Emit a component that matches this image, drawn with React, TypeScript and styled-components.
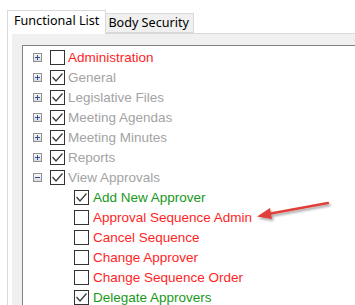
import styled, { createGlobalStyle } from 'styled-components';

const GlobalStyle = createGlobalStyle`
  html, body {
    margin: 0;
    padding: 0;
    background: #ffffff;
  }
`;

const Screen = styled.div`
  position: relative;
  display: flex;
  flex-direction: column;
  width: 355px;
  height: 305px;
  padding: 10px 0 0 7px;
  box-sizing: border-box;
  overflow: hidden;
  background: #ffffff;
`;

const TabStrip = styled.div`
  display: flex;
  align-items: flex-end;
  height: 23px;
`;

const Tab = styled.div<{ $active?: boolean }>`
  position: relative;
  z-index: ${(p) => (p.$active ? 1 : 0)};
  box-sizing: border-box;
  height: ${(p) => (p.$active ? '24px' : '20px')};
  margin-bottom: ${(p) => (p.$active ? '-1px' : '0')};
  padding: ${(p) => (p.$active ? '2px 6px 0 6px' : '1px 4px 0 2px')};
  border: 1px solid #d9d9d9;
  border-bottom: ${(p) => (p.$active ? 'none' : '1px solid #d9d9d9')};
  border-left: ${(p) => (p.$active ? '1px solid #d9d9d9' : 'none')};
  background: ${(p) => (p.$active ? '#ffffff' : '#f0f0f0')};
  color: #000000;
  font-family: 'Noto Sans', 'Open Sans', sans-serif;
  font-size: 12.6px;
  line-height: 16px;
  white-space: nowrap;
`;

const Panel = styled.div`
  flex: 1;
  display: flex;
  flex-direction: column;
  padding-left: 4px;
  border-top: 1px solid #d9d9d9;
  border-left: 1px solid #d9d9d9;
  background: #ffffff;
`;

const GroupArea = styled.div`
  flex: 1;
  display: flex;
  flex-direction: column;
  padding: 11px 0 0 10px;
  background: #f0f0f0;
`;

const TreeBox = styled.div`
  flex: 1;
  padding-top: 1px;
  border-top: 1px solid #828282;
  border-left: 1px solid #828282;
  background: #ffffff;
  font-family: 'Liberation Sans', Arial, sans-serif;
  font-size: 13.5px;
`;

const Row = styled.div<{ $child?: boolean }>`
  display: flex;
  align-items: center;
  height: 20px;
  padding-left: ${(p) => (p.$child ? '51px' : '10px')};
  white-space: nowrap;
`;

const Expander = styled.div`
  display: flex;
  align-items: center;
  justify-content: center;
  box-sizing: border-box;
  width: 9px;
  height: 9px;
  margin-right: 8px;
  border: 1px solid #919191;
  background: linear-gradient(#f8f8f8, #dcdcdc);
`;

const Box = styled.div`
  display: flex;
  align-items: center;
  justify-content: center;
  box-sizing: border-box;
  width: 15px;
  height: 15px;
  border: 1px solid #333333;
  background: #ffffff;
`;

const Label = styled.span<{ $tone: 'red' | 'green' | 'gray'; $child?: boolean }>`
  margin-left: ${(p) => (p.$child ? '4px' : '3px')};
  color: ${(p) => (p.$tone === 'red' ? '#ff1f1f' : p.$tone === 'green' ? '#17991a' : '#a3a3a3')};
`;

const ArrowLayer = styled.svg`
  position: absolute;
  left: 0;
  top: 0;
  pointer-events: none;
`;

const ExpandIcon = ({ open }: { open?: boolean }) => (
  <svg width="7" height="7" viewBox="0 0 7 7">
    <path d="M1 3.5h5" stroke="#2f4f9a" strokeWidth="1" />
    {!open && <path d="M3.5 1v5" stroke="#2f4f9a" strokeWidth="1" />}
  </svg>
);

const Check = ({ checked }: { checked: boolean }) => (
  <Box>
    {checked && (
      <svg width="13" height="13" viewBox="0 0 13 13">
        <path d="M1.5 6 L5 10 L11.5 2.5" fill="none" stroke="#3c3c3c" strokeWidth="1.3" />
      </svg>
    )}
  </Box>
);

type Tone = 'red' | 'green' | 'gray';

interface Item {
  label: string;
  tone: Tone;
  checked: boolean;
  child?: boolean;
  open?: boolean;
}

const items: Item[] = [
  { label: 'Administration', tone: 'red', checked: false },
  { label: 'General', tone: 'gray', checked: true },
  { label: 'Legislative Files', tone: 'gray', checked: true },
  { label: 'Meeting Agendas', tone: 'gray', checked: true },
  { label: 'Meeting Minutes', tone: 'gray', checked: true },
  { label: 'Reports', tone: 'gray', checked: true },
  { label: 'View Approvals', tone: 'gray', checked: true, open: true },
  { label: 'Add New Approver', tone: 'green', checked: true, child: true },
  { label: 'Approval Sequence Admin', tone: 'red', checked: false, child: true },
  { label: 'Cancel Sequence', tone: 'red', checked: false, child: true },
  { label: 'Change Approver', tone: 'red', checked: false, child: true },
  { label: 'Change Sequence Order', tone: 'red', checked: false, child: true },
  { label: 'Delegate Approvers', tone: 'green', checked: true, child: true },
];

export default function App() {
  return (
    <>
      <GlobalStyle />
      <Screen>
        <TabStrip>
          <Tab $active>Functional List</Tab>
          <Tab>Body Security</Tab>
        </TabStrip>
        <Panel>
          <GroupArea>
            <TreeBox>
              {items.map((it) => (
                <Row key={it.label} $child={it.child}>
                  {!it.child && (
                    <Expander>
                      <ExpandIcon open={it.open} />
                    </Expander>
                  )}
                  <Check checked={it.checked} />
                  <Label $tone={it.tone} $child={it.child}>
                    {it.label}
                  </Label>
                </Row>
              ))}
            </TreeBox>
          </GroupArea>
        </Panel>
        <ArrowLayer width="355" height="305" viewBox="0 0 355 305">
          <defs>
            <filter id="arrowShadow" x="-20%" y="-50%" width="140%" height="200%">
              <feDropShadow dx="1.5" dy="2" stdDeviation="1.2" floodColor="#000" floodOpacity="0.35" />
            </filter>
          </defs>
          <g filter="url(#arrowShadow)">
            <path d="M328 203 L268 214" stroke="#e0413a" strokeWidth="2.4" strokeLinecap="round" />
            <path d="M257 216.5 L270 208 L272 219 Z" fill="#e0413a" />
          </g>
        </ArrowLayer>
      </Screen>
    </>
  );
}
